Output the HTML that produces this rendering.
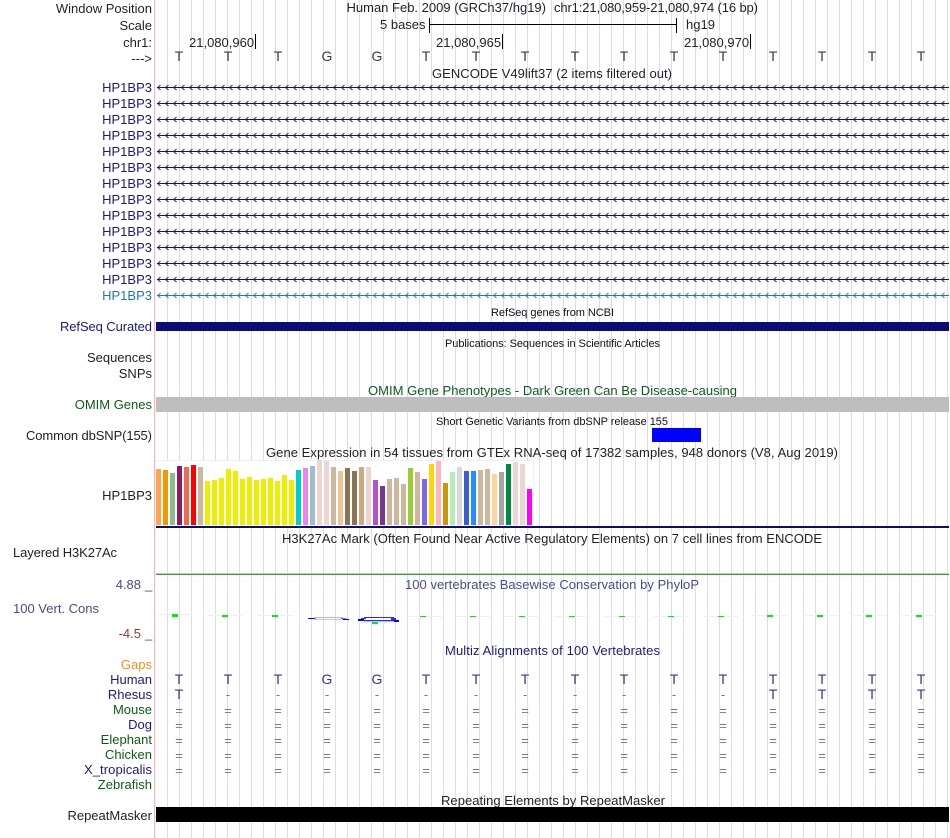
<!DOCTYPE html>
<html><head><meta charset="utf-8"><style>
html,body{margin:0;padding:0;background:#fff}
svg{display:block}
text{font-family:"Liberation Sans",Arial,sans-serif;font-size:13px}
.l{text-anchor:end}
.m{text-anchor:middle}
.n{fill:#1a1a80}
.g{fill:#0a5f14}
.k{fill:#222}
.s{font-size:11px;fill:#111}
.b{fill:#3c3c3c;font-size:14px}
.a{fill:#33388c;font-size:14px}
.e{fill:#7272b0}
</style></head><body>
<svg width="950" height="838" viewBox="0 0 950 838" xmlns="http://www.w3.org/2000/svg" shape-rendering="crispEdges">
<defs>
<pattern id="grid" x="167" y="0" width="12" height="838" patternUnits="userSpaceOnUse"><rect x="0" y="0" width="1" height="838" fill="#dcdaf4"/></pattern>
<pattern id="ar" x="157" y="84" width="8" height="16" patternUnits="userSpaceOnUse"><rect x="0" y="3" width="8" height="1" fill="#10107a"/><path d="M3.5 1 L0.5 3.5 L3.5 6" fill="none" stroke="#10107a" stroke-width="0.9" shape-rendering="auto"/></pattern>
<pattern id="ar2" x="157" y="292" width="8" height="16" patternUnits="userSpaceOnUse"><rect x="0" y="3" width="8" height="1" fill="#1f78b4"/><path d="M3.5 1 L0.5 3.5 L3.5 6" fill="none" stroke="#1f78b4" stroke-width="0.9" shape-rendering="auto"/></pattern>
</defs>
<rect width="950" height="838" fill="#fff"/>
<rect x="156" y="0" width="793" height="838" fill="url(#grid)"/>
<rect x="154" y="0" width="1" height="838" fill="#ffb0b0"/>

<text x="152" y="13" class="l k">Window Position</text>
<text x="152" y="30" class="l k">Scale</text>
<text x="152" y="47" class="l k">chr1:</text>
<text x="152" y="63" class="l k">---&gt;</text>

<text x="346.5" y="12" class="k" textLength="199.5">Human Feb. 2009 (GRCh37/hg19)</text>
<text x="554" y="12" class="k" textLength="204">chr1:21,080,959-21,080,974 (16 bp)</text>
<text x="380" y="29" class="k">5 bases</text>
<rect x="430" y="24" width="247" height="1" fill="#000"/>
<rect x="429" y="18" width="1" height="15" fill="#000"/>
<rect x="676" y="18" width="1" height="15" fill="#000"/>
<text x="686" y="29" class="k">hg19</text>
<text x="189" y="47" class="k">21,080,960</text>
<rect x="255" y="34" width="1" height="15" fill="#000"/>
<text x="436" y="47" class="k">21,080,965</text>
<rect x="502" y="34" width="1" height="15" fill="#000"/>
<text x="684" y="47" class="k">21,080,970</text>
<rect x="750" y="34" width="1" height="15" fill="#000"/>

<g>
<text x="179" y="61" class="m b">T</text><text x="228" y="61" class="m b">T</text><text x="278" y="61" class="m b">T</text><text x="327" y="61" class="m b">G</text><text x="377" y="61" class="m b">G</text><text x="426" y="61" class="m b">T</text><text x="476" y="61" class="m b">T</text><text x="525" y="61" class="m b">T</text><text x="575" y="61" class="m b">T</text><text x="624" y="61" class="m b">T</text><text x="674" y="61" class="m b">T</text><text x="723" y="61" class="m b">T</text><text x="773" y="61" class="m b">T</text><text x="822" y="61" class="m b">T</text><text x="872" y="61" class="m b">T</text><text x="921" y="61" class="m b">T</text>
</g>

<text x="432" y="78" class="k" textLength="240">GENCODE V49lift37 (2 items filtered out)</text>

<rect x="157" y="84" width="792" height="208" fill="url(#ar)"/>
<rect x="157" y="292" width="792" height="8" fill="url(#ar2)"/>
<g class="n">
<text x="152" y="92" class="l n">HP1BP3</text>
<text x="152" y="108" class="l n">HP1BP3</text>
<text x="152" y="124" class="l n">HP1BP3</text>
<text x="152" y="140" class="l n">HP1BP3</text>
<text x="152" y="156" class="l n">HP1BP3</text>
<text x="152" y="172" class="l n">HP1BP3</text>
<text x="152" y="188" class="l n">HP1BP3</text>
<text x="152" y="204" class="l n">HP1BP3</text>
<text x="152" y="220" class="l n">HP1BP3</text>
<text x="152" y="236" class="l n">HP1BP3</text>
<text x="152" y="252" class="l n">HP1BP3</text>
<text x="152" y="268" class="l n">HP1BP3</text>
<text x="152" y="284" class="l n">HP1BP3</text>
</g>
<text x="152" y="300" class="l" fill="#1f78b4">HP1BP3</text>

<text x="491" y="316" class="s" textLength="123">RefSeq genes from NCBI</text>
<text x="60" y="331" class="n" textLength="92">RefSeq Curated</text>
<rect x="156" y="322" width="793" height="9" fill="#0c0c78"/>

<text x="445" y="347" class="s" textLength="215">Publications: Sequences in Scientific Articles</text>
<text x="152" y="362" class="l k">Sequences</text>
<text x="152" y="378" class="l k">SNPs</text>

<text x="368" y="395" class="g" textLength="369">OMIM Gene Phenotypes - Dark Green Can Be Disease-causing</text>
<text x="152" y="409" class="l g">OMIM Genes</text>
<rect x="156" y="397" width="793" height="15" fill="#bebebe"/>

<text x="436" y="425" class="s" textLength="232">Short Genetic Variants from dbSNP release 155</text>
<text x="26" y="440" class="k" textLength="126">Common dbSNP(155)</text>
<rect x="652" y="428" width="49" height="14" fill="#0000ff"/>

<text x="266" y="457" class="k" textLength="572">Gene Expression in 54 tissues from GTEx RNA-seq of 17382 samples, 948 donors (V8, Aug 2019)</text>
<text x="152" y="500" class="l k">HP1BP3</text>

<rect x="155" y="460" width="379" height="66" fill="#fff"/>
<rect x="155" y="460" width="379" height="1" fill="#f0eef8"/>
<rect x="533" y="460" width="1" height="66" fill="#f0eef8"/>
<g>
<rect x="156" y="469" width="5" height="56" fill="#ffa54f"/>
<rect x="163" y="470" width="5" height="55" fill="#ee9a00"/>
<rect x="170" y="473" width="5" height="52" fill="#8fbc8f"/>
<rect x="177" y="466" width="5" height="59" fill="#8b1c62"/>
<rect x="184" y="467" width="5" height="58" fill="#ee6a50"/>
<rect x="191" y="465" width="5" height="60" fill="#ff0000"/>
<rect x="198" y="467" width="5" height="58" fill="#cdb79e"/>
<rect x="205" y="481" width="5" height="44" fill="#eeee00"/>
<rect x="212" y="480" width="5" height="45" fill="#eeee00"/>
<rect x="219" y="478" width="5" height="47" fill="#eeee00"/>
<rect x="226" y="469" width="5" height="56" fill="#eeee00"/>
<rect x="233" y="471" width="5" height="54" fill="#eeee00"/>
<rect x="240" y="479" width="5" height="46" fill="#eeee00"/>
<rect x="247" y="477" width="5" height="48" fill="#eeee00"/>
<rect x="254" y="480" width="5" height="45" fill="#eeee00"/>
<rect x="261" y="479" width="5" height="46" fill="#eeee00"/>
<rect x="268" y="478" width="5" height="47" fill="#eeee00"/>
<rect x="275" y="481" width="5" height="44" fill="#eeee00"/>
<rect x="282" y="475" width="5" height="50" fill="#eeee00"/>
<rect x="289" y="480" width="5" height="45" fill="#eeee00"/>
<rect x="296" y="470" width="5" height="55" fill="#00cdcd"/>
<rect x="303" y="468" width="5" height="57" fill="#ee82ee"/>
<rect x="310" y="466" width="5" height="59" fill="#9ac0cd"/>
<rect x="317" y="460" width="5" height="65" fill="#eed5d2"/>
<rect x="324" y="461" width="5" height="64" fill="#eed5d2"/>
<rect x="331" y="467" width="5" height="58" fill="#cdb79e"/>
<rect x="338" y="471" width="5" height="54" fill="#eec591"/>
<rect x="345" y="468" width="5" height="57" fill="#8b7355"/>
<rect x="352" y="471" width="5" height="54" fill="#8b7355"/>
<rect x="359" y="467" width="5" height="58" fill="#cdaa7d"/>
<rect x="366" y="467" width="5" height="58" fill="#eed5d2"/>
<rect x="373" y="480" width="5" height="45" fill="#b452cd"/>
<rect x="380" y="486" width="5" height="39" fill="#7a378b"/>
<rect x="387" y="479" width="5" height="46" fill="#cdb79e"/>
<rect x="394" y="478" width="5" height="47" fill="#cdb79e"/>
<rect x="401" y="484" width="5" height="41" fill="#cdb79e"/>
<rect x="408" y="468" width="5" height="57" fill="#9acd32"/>
<rect x="415" y="472" width="5" height="53" fill="#cdb79e"/>
<rect x="422" y="479" width="5" height="46" fill="#7a67ee"/>
<rect x="429" y="464" width="5" height="61" fill="#ffd700"/>
<rect x="436" y="461" width="5" height="64" fill="#ffb6c1"/>
<rect x="443" y="483" width="5" height="42" fill="#cd950c"/>
<rect x="450" y="472" width="5" height="53" fill="#b4eeb4"/>
<rect x="457" y="467" width="5" height="58" fill="#d9d9d9"/>
<rect x="464" y="471" width="5" height="54" fill="#3a5fcd"/>
<rect x="471" y="471" width="5" height="54" fill="#1e90ff"/>
<rect x="478" y="470" width="5" height="55" fill="#cdb79e"/>
<rect x="485" y="469" width="5" height="56" fill="#cdb79e"/>
<rect x="492" y="474" width="5" height="51" fill="#ffd39b"/>
<rect x="499" y="472" width="5" height="53" fill="#a6a6a6"/>
<rect x="506" y="464" width="5" height="61" fill="#008b45"/>
<rect x="513" y="462" width="5" height="63" fill="#eed5d2"/>
<rect x="520" y="464" width="5" height="61" fill="#eed5d2"/>
<rect x="527" y="489" width="5" height="36" fill="#ff00ff"/>
</g>
<rect x="156" y="526" width="793" height="2" fill="#0c0c78"/>

<text x="282" y="543" class="k" textLength="540">H3K27Ac Mark (Often Found Near Active Regulatory Elements) on 7 cell lines from ENCODE</text>
<text x="13" y="557" class="k" textLength="104">Layered H3K27Ac</text>
<rect x="156" y="573" width="793" height="1" fill="#d8c890"/>
<rect x="156" y="574" width="793" height="1" fill="#2e9b5f"/>

<text x="405" y="589" fill="#4a4a92" textLength="294">100 vertebrates Basewise Conservation by PhyloP</text>
<text x="141" y="589" class="l" fill="#4a4a92">4.88</text>
<text x="145" y="589" fill="#4a4a92">_</text>
<text x="99" y="613" class="l" fill="#4a4a92">100 Vert. Cons</text>
<text x="141" y="638" class="l" fill="#8f3a3a">-4.5</text>
<text x="145" y="638" fill="#8f3a3a">_</text>

<g fill="#e2fbe2">
<rect x="157" y="614" width="36" height="1"/><rect x="207" y="615" width="36" height="1"/><rect x="257" y="615" width="36" height="1"/><rect x="356" y="622" width="36" height="1"/><rect x="406" y="616" width="36" height="1"/><rect x="456" y="616" width="35" height="1"/><rect x="504" y="616" width="36" height="1"/><rect x="554" y="616" width="36" height="1"/><rect x="604" y="616" width="36" height="1"/><rect x="653" y="616" width="36" height="1"/><rect x="703" y="616" width="36" height="1"/><rect x="752" y="615" width="36" height="1"/><rect x="802" y="615" width="36" height="1"/><rect x="851" y="615" width="36" height="1"/><rect x="901" y="615" width="36" height="1"/>
</g>
<g fill="#00f000">
<rect x="172" y="614" width="6" height="3"/><rect x="222" y="615" width="6" height="2"/><rect x="272" y="615" width="6" height="2"/><rect x="372" y="622" width="6" height="2"/><rect x="420" y="616" width="6" height="1"/><rect x="470" y="616" width="6" height="1"/><rect x="519" y="616" width="6" height="1"/><rect x="569" y="616" width="6" height="1"/><rect x="619" y="616" width="6" height="1"/><rect x="668" y="616" width="6" height="1"/><rect x="718" y="616" width="6" height="1"/><rect x="767" y="615" width="6" height="2"/><rect x="817" y="615" width="6" height="2"/><rect x="866" y="615" width="6" height="2"/><rect x="916" y="615" width="6" height="2"/>
</g>
<g>
<rect x="314" y="617" width="29" height="1" fill="#b4b4ff"/><rect x="314" y="619" width="29" height="1" fill="#c4c4ff"/>
<rect x="311" y="618" width="5" height="1" fill="#6a6aff"/><rect x="341" y="618" width="5" height="1" fill="#6a6aff"/>
<rect x="308" y="618" width="6" height="1" fill="#0000ff"/><rect x="343" y="619" width="6" height="1" fill="#0000ff"/>
<rect x="364" y="617" width="30" height="1" fill="#2a2aff"/><rect x="364" y="620" width="30" height="1" fill="#2a2aff"/>
<rect x="361" y="618" width="5" height="1" fill="#2a2aff"/><rect x="391" y="618" width="5" height="2" fill="#2a2aff"/>
<rect x="358" y="619" width="6" height="2" fill="#0000ff"/><rect x="394" y="620" width="5" height="2" fill="#0000ff"/>
<rect x="364" y="621" width="30" height="1" fill="#c0c0ff"/>
</g>

<text x="445" y="655" class="n" textLength="215">Multiz Alignments of 100 Vertebrates</text>
<text x="152" y="669" class="l" fill="#f0901c">Gaps</text>
<text x="152" y="684" class="l n">Human</text>
<text x="152" y="699" class="l n">Rhesus</text>
<text x="152" y="714" class="l g">Mouse</text>
<text x="152" y="729" class="l n">Dog</text>
<text x="152" y="744" class="l g">Elephant</text>
<text x="152" y="759" class="l g">Chicken</text>
<text x="84" y="774" class="n" textLength="68">X_tropicalis</text>
<text x="152" y="789" class="l g">Zebrafish</text>

<g>
<text x="179" y="684" class="m a">T</text><text x="228" y="684" class="m a">T</text><text x="278" y="684" class="m a">T</text><text x="327" y="684" class="m a">G</text><text x="377" y="684" class="m a">G</text><text x="426" y="684" class="m a">T</text><text x="476" y="684" class="m a">T</text><text x="525" y="684" class="m a">T</text><text x="575" y="684" class="m a">T</text><text x="624" y="684" class="m a">T</text><text x="674" y="684" class="m a">T</text><text x="723" y="684" class="m a">T</text><text x="773" y="684" class="m a">T</text><text x="822" y="684" class="m a">T</text><text x="872" y="684" class="m a">T</text><text x="921" y="684" class="m a">T</text>
<text x="179" y="699" class="m a">T</text><text x="228" y="699" class="m e">-</text><text x="278" y="699" class="m e">-</text><text x="327" y="699" class="m e">-</text><text x="377" y="699" class="m e">-</text><text x="426" y="699" class="m e">-</text><text x="476" y="699" class="m e">-</text><text x="525" y="699" class="m e">-</text><text x="575" y="699" class="m e">-</text><text x="624" y="699" class="m e">-</text><text x="674" y="699" class="m e">-</text><text x="723" y="699" class="m e">-</text><text x="773" y="699" class="m a">T</text><text x="822" y="699" class="m a">T</text><text x="872" y="699" class="m a">T</text><text x="921" y="699" class="m a">T</text>
<text x="179" y="715" class="m e">=</text><text x="228" y="715" class="m e">=</text><text x="278" y="715" class="m e">=</text><text x="327" y="715" class="m e">=</text><text x="377" y="715" class="m e">=</text><text x="426" y="715" class="m e">=</text><text x="476" y="715" class="m e">=</text><text x="525" y="715" class="m e">=</text><text x="575" y="715" class="m e">=</text><text x="624" y="715" class="m e">=</text><text x="674" y="715" class="m e">=</text><text x="723" y="715" class="m e">=</text><text x="773" y="715" class="m e">=</text><text x="822" y="715" class="m e">=</text><text x="872" y="715" class="m e">=</text><text x="921" y="715" class="m e">=</text>
<text x="179" y="730" class="m e">=</text><text x="228" y="730" class="m e">=</text><text x="278" y="730" class="m e">=</text><text x="327" y="730" class="m e">=</text><text x="377" y="730" class="m e">=</text><text x="426" y="730" class="m e">=</text><text x="476" y="730" class="m e">=</text><text x="525" y="730" class="m e">=</text><text x="575" y="730" class="m e">=</text><text x="624" y="730" class="m e">=</text><text x="674" y="730" class="m e">=</text><text x="723" y="730" class="m e">=</text><text x="773" y="730" class="m e">=</text><text x="822" y="730" class="m e">=</text><text x="872" y="730" class="m e">=</text><text x="921" y="730" class="m e">=</text>
<text x="179" y="745" class="m e">=</text><text x="228" y="745" class="m e">=</text><text x="278" y="745" class="m e">=</text><text x="327" y="745" class="m e">=</text><text x="377" y="745" class="m e">=</text><text x="426" y="745" class="m e">=</text><text x="476" y="745" class="m e">=</text><text x="525" y="745" class="m e">=</text><text x="575" y="745" class="m e">=</text><text x="624" y="745" class="m e">=</text><text x="674" y="745" class="m e">=</text><text x="723" y="745" class="m e">=</text><text x="773" y="745" class="m e">=</text><text x="822" y="745" class="m e">=</text><text x="872" y="745" class="m e">=</text><text x="921" y="745" class="m e">=</text>
<text x="179" y="760" class="m e">=</text><text x="228" y="760" class="m e">=</text><text x="278" y="760" class="m e">=</text><text x="327" y="760" class="m e">=</text><text x="377" y="760" class="m e">=</text><text x="426" y="760" class="m e">=</text><text x="476" y="760" class="m e">=</text><text x="525" y="760" class="m e">=</text><text x="575" y="760" class="m e">=</text><text x="624" y="760" class="m e">=</text><text x="674" y="760" class="m e">=</text><text x="723" y="760" class="m e">=</text><text x="773" y="760" class="m e">=</text><text x="822" y="760" class="m e">=</text><text x="872" y="760" class="m e">=</text><text x="921" y="760" class="m e">=</text>
<text x="179" y="775" class="m e">=</text><text x="228" y="775" class="m e">=</text><text x="278" y="775" class="m e">=</text><text x="327" y="775" class="m e">=</text><text x="377" y="775" class="m e">=</text><text x="426" y="775" class="m e">=</text><text x="476" y="775" class="m e">=</text><text x="525" y="775" class="m e">=</text><text x="575" y="775" class="m e">=</text><text x="624" y="775" class="m e">=</text><text x="674" y="775" class="m e">=</text><text x="723" y="775" class="m e">=</text><text x="773" y="775" class="m e">=</text><text x="822" y="775" class="m e">=</text><text x="872" y="775" class="m e">=</text><text x="921" y="775" class="m e">=</text>
</g>

<text x="441" y="805" class="k" textLength="224">Repeating Elements by RepeatMasker</text>
<text x="152" y="820" class="l k">RepeatMasker</text>
<rect x="156" y="807" width="793" height="15" fill="#000"/>
</svg>
</body></html>
